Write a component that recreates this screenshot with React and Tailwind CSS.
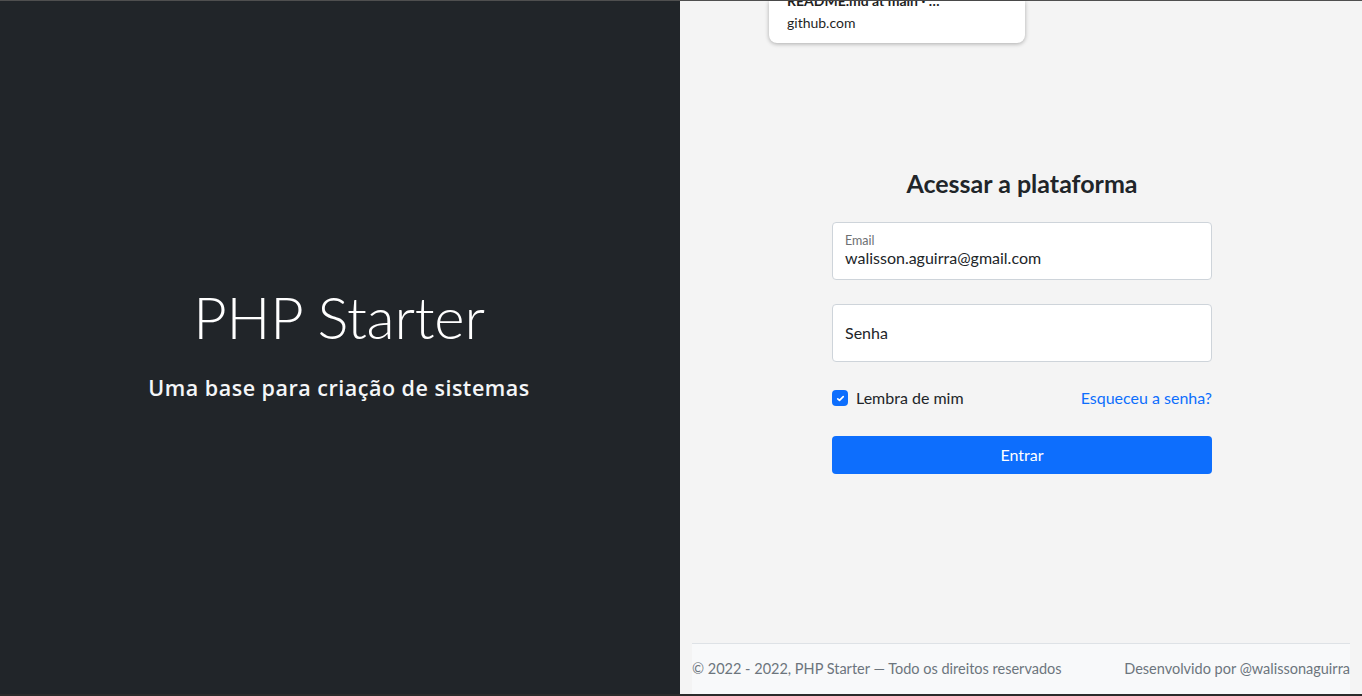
export default function App() {
  const font = { fontFamily: '"Lato", "Noto Sans", sans-serif' };
  return (
    <div className="relative flex h-[696px] w-[1362px] flex-col overflow-hidden bg-[#2b2b2b]" style={font}>
      <div className="h-px w-full bg-[#4f4f4f]" />
      <div className="flex h-[693px] w-full">
        <div className="flex w-[680px] flex-col items-center justify-center bg-[#212529] pb-[12px] pr-[2px] text-white">
          <h1 className="text-[58px] font-light leading-[1.2] tracking-[-0.2px]">PHP Starter</h1>
          <h5
            className="mt-[23px] text-[21.5px] font-semibold leading-[1.2] tracking-[0.5px] text-[#f4f6f8]"
            style={{ fontFamily: '"Open Sans", "Noto Sans", sans-serif' }}
          >
            Uma base para criação de sistemas
          </h5>
        </div>
        <div className="flex flex-1 flex-col bg-[#f4f4f4]">
          <div className="flex flex-1 flex-col items-center justify-center pb-[2px] pl-[2px]">
            <div className="flex w-[380px] flex-col">
              <h3 className="mb-[24px] text-center text-[25px] font-bold leading-[1.2] text-[#212529]">Acessar a plataforma</h3>
              <div className="relative h-[58px] rounded-[4px] border border-[#ced4da] bg-white">
                <div className="absolute left-[12px] top-[10px] text-[12.5px] leading-[1.2] text-[#6d7072]">Email</div>
                <div className="absolute left-[12px] top-[23px] text-[16px] leading-[1.5] text-[#212529]">walisson.aguirra@gmail.com</div>
              </div>
              <div className="mt-[24px] flex h-[58px] items-center rounded-[4px] border border-[#ced4da] bg-white px-[12px] text-[16px] text-[#212529]">
                Senha
              </div>
              <div className="mt-[24px] flex h-[24px] items-center justify-between text-[16px]">
                <label className="flex items-center gap-[8px] text-[#212529]">
                  <span className="flex h-[16px] w-[16px] items-center justify-center rounded-[4px] bg-[#0d6efd]">
                    <svg width="11" height="11" viewBox="0 0 20 20" fill="none">
                      <path d="M5 10.5l3.2 3L15 6.5" stroke="white" strokeWidth="3" strokeLinecap="round" strokeLinejoin="round" />
                    </svg>
                  </span>
                  Lembra de mim
                </label>
                <a className="text-[#0d6efd]">Esqueceu a senha?</a>
              </div>
              <button className="mt-[26px] h-[38px] w-full rounded-[4px] bg-[#0d6efd] text-[16px] text-white">Entrar</button>
            </div>
          </div>
          <div className="flex h-[51px] items-start px-[12px]">
            <div className="flex h-[51px] w-full items-center justify-between border-t border-[#dee2e6] bg-[#f8f9fa] text-[14.5px] text-[#6c757d]">
              <span>© 2022 - 2022, PHP Starter — Todo os direitos reservados</span>
              <span>Desenvolvido por @walissonaguirra</span>
            </div>
          </div>
        </div>
      </div>
      <div className="h-[2px] w-full bg-[#2b2b2b]" />
      <div className="absolute left-[769px] top-px h-[42px] w-[256px] overflow-hidden rounded-b-[8px] bg-white shadow-[0_1px_4px_rgba(0,0,0,0.3)]">
        <div className="absolute left-[18px] top-[-9px] text-[14px] font-bold leading-[18px] text-[#1f1f1f]">README.md at main · …</div>
        <div className="absolute left-[18px] top-[12px] text-[14px] leading-[20px] text-[#1f1f1f]">github.com</div>
      </div>
    </div>
  );
}
